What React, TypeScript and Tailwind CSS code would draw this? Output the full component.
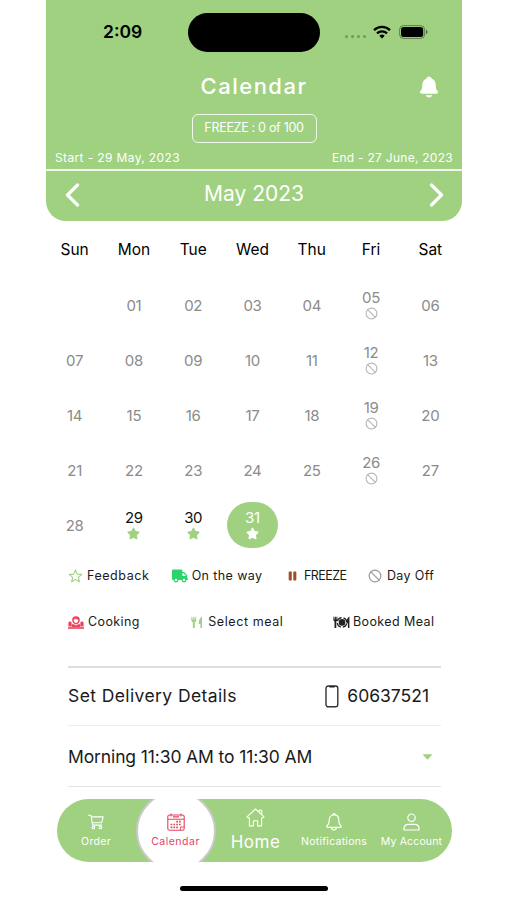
import React, { useState } from 'react';
import { Ban } from 'lucide-react';
import { FaStar, FaTruck } from 'react-icons/fa';
import { IoNotifications } from 'react-icons/io5';

type DayCell = {
  label: string;
  mark?: 'off' | 'star';
};

type TabName = 'Order' | 'Calendar' | 'Home' | 'Notifications' | 'My Account';

const WEEKDAYS = ['Sun', 'Mon', 'Tue', 'Wed', 'Thu', 'Fri', 'Sat'];
const DAYS_OFF = [5, 12, 19, 26];
const MEAL_DAYS = [29, 30, 31];

// May 2023 starts on a Monday, so there is one empty cell in front
const days: DayCell[] = [
  { label: '' },
  ...Array.from({ length: 31 }, (_, i): DayCell => {
    const day = i + 1;
    return {
      label: String(day).padStart(2, '0'),
      mark: DAYS_OFF.includes(day) ? 'off' : MEAL_DAYS.includes(day) ? 'star' : undefined,
    };
  }),
];

const WifiIcon = () => (
  <svg width="18" height="14" viewBox="0 0 18 14" fill="none" stroke="black" strokeWidth="2.3">
    <path d="M1 5.2a11.5 11.5 0 0 1 16 0" />
    <path d="M4 8.4a7.2 7.2 0 0 1 10 0" />
    <path d="M9 13.4 6.3 10.7a3.9 3.9 0 0 1 5.4 0z" fill="black" stroke="none" />
  </svg>
);

const BatteryIcon = () => (
  <svg width="29" height="14" viewBox="0 0 29 14" fill="none">
    <rect x="0.6" y="0.6" width="25" height="12.8" rx="4" stroke="black" strokeOpacity="0.4" />
    <rect x="2" y="2" width="22.2" height="10" rx="2.8" fill="black" />
    <path d="M27 4.8v4.4c1-.4 1.5-1.2 1.5-2.2S28 5.2 27 4.8z" fill="black" fillOpacity="0.5" />
  </svg>
);

const PauseIcon = () => (
  <svg width="10" height="12" viewBox="0 0 10 12" fill="#a34d27">
    <rect x="0.8" y="0.8" width="3.5" height="10.2" rx="0.6" />
    <rect x="6" y="0.8" width="3.5" height="10.2" rx="0.6" />
  </svg>
);

const CutleryIcon = () => (
  <svg width="12" height="13" viewBox="0 0 12 13" fill="#9fd181">
    <path d="M.4.5h1v3h.9v-3h1.200v3h.9v-3h1v3.700c0 1-.6 1.700-1.500 2v5.900H1.900V6.200C1 5.900.4 5.200.4 4.200z" />
    <path d="M11.500.4v11.700H9.700V8H8C7.900 4.200 8.900 1.300 11.500.4z" />
  </svg>
);

const CookIcon = () => (
  <svg width="16" height="13" viewBox="0 0 16 13" fill="#e8475b">
    <path
      fillRule="evenodd"
      d="M8 .3a3.700 3.700 0 0 1 3.800 3.700c0 1.400-.6 2.700-1.600 3.600L8 8.600 5.800 7.600A4.700 4.700 0 0 1 4.200 4 3.700 3.700 0 0 1 8 .3zM5.700 3.800c0 1.800.9 3.200 2.300 3.200s2.300-1.400 2.300-3.200C9 3.800 8 3.300 7.300 2.600c-.3.600-.9 1.100-1.600 1.200z"
    />
    <path d="M4.800 7.800 8 9.600l3.200-1.800 1 1.200v2H3.800V9z" />
    <path d="M2 5.600c1 0 1.700.7 1.700 1.600v3.200H.4V7.200c0-.9.6-1.600 1.600-1.600zM14 5.600c1 0 1.600.7 1.600 1.600v3.200h-3.300V7.200c0-.9.7-1.600 1.700-1.600z" />
    <path d="M0 11.200h16v1.600H0z" />
  </svg>
);

const DishIcon = () => (
  <svg width="17" height="13" viewBox="0 0 17 13" fill="none" stroke="#222">
    <path d="M.4.7h1v2.600h.5V.7h1v2.600h.5V.7h1v3.100c0 .8-.4 1.300-1.100 1.600v6.600H1.500V5.400C.8 5.100.4 4.600.4 3.800z" fill="#222" stroke="none" />
    <path d="M16.400.6v11.400h-1.500V7.300h-1.300c-.1-3.300.8-5.900 2.800-6.700z" fill="#222" stroke="none" />
    <circle cx="9" cy="6.400" r="4.800" strokeWidth="1.200" strokeDasharray="5.500 2.040" strokeDashoffset="-1" />
    <circle cx="9" cy="6.400" r="3.300" fill="#222" stroke="none" />
  </svg>
);

const PhoneIcon = () => (
  <svg width="14" height="23" viewBox="0 0 14 23" fill="none" stroke="#333">
    <rect x="1" y="1" width="11.8" height="20.8" rx="2.2" strokeWidth="1.400" />
    <path d="M4 1h6v.6a1 1 0 0 1-1 1H5a1 1 0 0 1-1-1z" fill="#222" stroke="none" />
  </svg>
);

const CartIcon = () => (
  <svg width="16" height="16" viewBox="0 0 16 16" fill="none" stroke="currentColor" strokeWidth="1.1">
    <path d="M.5 1.200h2.400l1.800 9.900h9" strokeLinecap="round" strokeLinejoin="round" />
    <path d="M3.200 2.900h12l-1.600 5.800H4.300" strokeLinejoin="round" />
    <circle cx="5.400" cy="13.500" r="1.300" />
    <circle cx="12.500" cy="13.500" r="1.300" />
  </svg>
);

const CalendarIcon = () => (
  <svg width="18" height="18" viewBox="0 0 18 18" fill="none" stroke="currentColor" strokeWidth="1.1">
    <rect x="0.8" y="2" width="16.4" height="15.2" rx="1.8" />
    <path d="M.8 6.200h16.400M4 .4v3M14 .4v3M6 3.900h6" />
    <path d="M9.200 8.700h5.600M3.600 11.500h11.200M3.600 14.300h8.400" strokeWidth="1.7" strokeDasharray="1.700 1.100" />
    <path d="M13.400 17v-3h3.600" strokeWidth="0.9" />
  </svg>
);

const HomeIcon = () => (
  <svg width="19" height="19" viewBox="0 0 19 19" fill="none" stroke="currentColor" strokeWidth="1.1" strokeLinejoin="round">
    <path d="M3 9.900 1 8.900 9.500 1 18 8.900l-2 1M3.400 9.500v8.400h4v-5.200h4.200v5.200h4V9.500M13.200 4.400V2.200h2.600v4.600" />
  </svg>
);

const BellIcon = () => (
  <svg width="16" height="18" viewBox="0 0 16 18" fill="none" stroke="currentColor" strokeWidth="1.2" strokeLinejoin="round">
    <path d="M8 1.900c-3 0-4.700 2.200-4.700 4.800 0 3.700-.8 5-2.200 6.200-.6.600-.3 1.500.5 1.500h12.800c.8 0 1.100-.9.500-1.500-1.400-1.200-2.200-2.500-2.200-6.200 0-2.600-1.700-4.800-4.700-4.800z" />
    <path d="M6.800 1.900a1.200 1.200 0 0 1 2.400 0M5.600 14.600a2.400 2.400 0 0 0 4.800 0" />
  </svg>
);

const UserIcon = () => (
  <svg width="17" height="18" viewBox="0 0 17 18" fill="none" stroke="currentColor" strokeWidth="1.2" strokeLinejoin="round">
    <circle cx="8.500" cy="4.700" r="3.700" />
    <path d="M1 17v-1.300c0-2.700 1.900-4.300 4.300-4.300h6.400c2.400 0 4.300 1.600 4.300 4.300V17z" />
  </svg>
);

const tabs: { name: TabName; icon: React.ElementType; className: string; textClass: string }[] = [
  { name: 'Order', icon: CartIcon, className: 'w-[79px] gap-[4px] pt-[3px]', textClass: 'text-[10.5px] tracking-[0.3px]' },
  { name: 'Calendar', icon: CalendarIcon, className: 'w-20 h-20 gap-[3px] pt-[2px] rounded-full bg-white border-2 border-[#c9c9c9] text-[#e2455d]', textClass: 'text-[10.5px] tracking-[0.5px]' },
  { name: 'Home', icon: HomeIcon, className: 'w-20 gap-[7px] pb-[3px]', textClass: 'text-[17px] tracking-[0.5px]' },
  { name: 'Notifications', icon: BellIcon, className: 'w-[77px] gap-[3px] pt-[2px]', textClass: 'text-[10.5px] tracking-[0.25px]' },
  { name: 'My Account', icon: UserIcon, className: 'w-[78px] gap-[3px] pt-[2px]', textClass: 'text-[10.5px] tracking-[0.15px]' },
];

const App = () => {
  const [selected, setSelected] = useState('31');

  return (
    <div className="w-[507px] h-[900px] bg-white overflow-hidden font-['Inter',sans-serif]">
      <div className="w-[416px] ml-[46px]">
        <header className="h-[221px] bg-[#9fd181] rounded-b-[20px] text-white">
          <div className="h-16 flex items-center text-black">
            <span className="w-[142px] pl-[57px] text-[17.5px] font-semibold">2:09</span>
            <div className="w-[132px] h-[39px] rounded-full bg-black" />
            <div className="flex items-center pl-[25px]">
              <div className="flex gap-[3px] pt-[9px]">
                {[0, 1, 2, 3].map((dot) => (
                  <span key={dot} className="size-[3px] rounded-full bg-[#6f9a58]" />
                ))}
              </div>
              <div className="ml-[7px]"><WifiIcon /></div>
              <div className="ml-[8px]"><BatteryIcon /></div>
            </div>
          </div>

          <div className="h-[46px] pb-[1px] flex items-center justify-between">
            <span className="w-10" />
            <h1 className="text-[22px] font-medium tracking-[1.5px] whitespace-nowrap">Calendar</h1>
            <IoNotifications size={24} className="mr-[21px] -ml-[5px]" />
          </div>

          <div className="pt-1 flex justify-center">
            <div className="w-[125px] h-[29px] rounded-[6px] border-[1.5px] border-white/85 flex items-center justify-center text-[12.5px] tracking-[-0.3px]">
              FREEZE : 0 of 100
            </div>
          </div>

          <div className="h-[28px] border-b-2 border-white/85 px-[9px] pt-[3px] flex items-center justify-between text-[12px]">
            <span className="tracking-[0.37px]">Start - 29 May, 2023</span>
            <span className="tracking-[0.27px]">End - 27 June, 2023</span>
          </div>

          <div className="h-[50px] pb-[3px] px-[18.5px] flex items-center justify-between">
            <svg width="15" height="24" viewBox="0 0 15 24" fill="none" stroke="white" strokeWidth="3.2" strokeLinecap="round" strokeLinejoin="round">
              <path d="M12.500 2 2.500 12l10 10" />
            </svg>
            <h2 className="pb-[1px] text-[21px]">May 2023</h2>
            <svg width="15" height="24" viewBox="0 0 15 24" fill="none" stroke="white" strokeWidth="3.2" strokeLinecap="round" strokeLinejoin="round">
              <path d="m2.500 2 10 10-10 10" />
            </svg>
          </div>
        </header>

        <div className="-ml-[1px] w-[415px] grid grid-cols-7 text-center">
          {WEEKDAYS.map((name) => (
            <div key={name} className="h-[57px] leading-[58px] text-[15.5px] text-black">{name}</div>
          ))}
          {days.map((day, index) => {
            const isSelected = day.label !== '' && day.label === selected;
            const textColor = isSelected ? 'text-white' : day.mark === 'star' ? 'text-[#111]' : 'text-[#8b8b8b]';
            return (
              <div key={index} className={`h-[55px] flex items-center justify-center ${day.mark ? 'pb-[2px]' : ''}`}>
                <button
                  onClick={() => setSelected(day.label)}
                  className={`w-[51px] h-[46px] rounded-[23px] flex flex-col items-center justify-center gap-[1px] leading-[17px] text-[15px] tracking-[-0.3px] ${textColor} ${
                    isSelected ? 'bg-[#9fd181]' : ''
                  }`}
                >
                  {day.label}
                  {day.mark === 'off' && <Ban size={13} strokeWidth={2} className="text-[#b5b5b5]" />}
                  {day.mark === 'star' && (
                    <FaStar size={13} className={isSelected ? 'text-white' : 'text-[#9fd181]'} />
                  )}
                </button>
              </div>
            );
          })}
        </div>

        <div className="ml-[22px] w-[367px] text-[12.5px] text-[#1a1a1a] whitespace-nowrap">
          <div className="h-[46px] flex items-center justify-between">
            <div className="w-[82px] flex items-center gap-[4px]">
              <svg width="15" height="14" viewBox="0 0 15 14" fill="none" stroke="#9fd181" strokeWidth="1.1" strokeLinejoin="round">
                <path d="m7.500.9 1.700 4.200 4.600.3-3.500 2.900 1.100 4.500-3.900-2.400-3.900 2.400 1.100-4.500L1.200 5.400l4.600-.3z" />
              </svg>
              <span className="tracking-[0.55px]">Feedback</span>
            </div>
            <div className="w-[95px] flex items-center gap-[4px]">
              <FaTruck size={16} className="text-[#2bd36b]" />
              <span className="tracking-[0.4px]">On the way</span>
            </div>
            <div className="w-[58px] flex items-center gap-[7px]">
              <PauseIcon />
              <span className="tracking-[-0.6px]">FREEZE</span>
            </div>
            <div className="w-[67px] flex items-center gap-[5px]">
              <Ban size={14} strokeWidth={2} className="text-[#999]" />
              <span className="tracking-[0.35px]">Day Off</span>
            </div>
          </div>
          <div className="h-[46px] flex items-center justify-between">
            <div className="w-[73px] flex items-center gap-1">
              <CookIcon />
              <span className="tracking-[0.4px]">Cooking</span>
            </div>
            <div className="w-[93px] flex items-center gap-[6px]">
              <CutleryIcon />
              <span className="tracking-[0.6px]">Select meal</span>
            </div>
            <div className="w-[102px] flex items-center gap-[3px]">
              <DishIcon />
              <span className="tracking-[0.4px]">Booked Meal</span>
            </div>
          </div>
        </div>

        <div className="ml-[22px] mt-[21px] w-[373px] border-t-2 border-[#dedede] text-[17.5px] text-[#1a1a1a]">
          <div className="h-[58px] pr-[12px] flex items-center justify-between border-b border-[#ececec]">
            <span className="tracking-[0.4px]">Set Delivery Details</span>
            <div className="flex items-center gap-2">
              <PhoneIcon />
              <span>60637521</span>
            </div>
          </div>
          <div className="h-[61px] pt-[2px] pr-[8px] flex items-center justify-between border-b border-[#e4e4e4]">
            <span className="tracking-[-0.12px]">Morning 11:30 AM to 11:30 AM</span>
            <svg width="11" height="6" viewBox="0 0 11 6" fill="#9fd181">
              <path d="M.5.300h10L5.500 5.800z" />
            </svg>
          </div>
        </div>

        <nav className="ml-[10.5px] mt-[12px] w-[395px] h-[63px] rounded-full bg-[#9fd181] text-white overflow-hidden flex items-center">
          {tabs.map((tab) => (
            <button
              key={tab.name}
              className={`shrink-0 flex flex-col items-center justify-center whitespace-nowrap ${tab.className}`}
            >
              <tab.icon />
              <span className={`leading-[16px] ${tab.textClass}`}>{tab.name}</span>
            </button>
          ))}
        </nav>

        <div className="mt-[24px] ml-[134px] w-[148px] h-[5px] rounded-full bg-black" />
      </div>
    </div>
  );
};

export default App;
